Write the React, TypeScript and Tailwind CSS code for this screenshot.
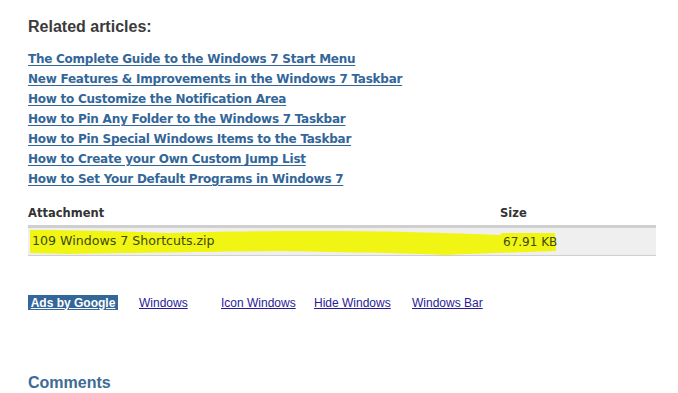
import React from "react";

const articles = [
  "The Complete Guide to the Windows 7 Start Menu",
  "New Features & Improvements in the Windows 7 Taskbar",
  "How to Customize the Notification Area",
  "How to Pin Any Folder to the Windows 7 Taskbar",
  "How to Pin Special Windows Items to the Taskbar",
  "How to Create your Own Custom Jump List",
  "How to Set Your Default Programs in Windows 7",
];

const ads = [
  { label: "Windows", w: "w-[82px]" },
  { label: "Icon Windows", w: "w-[93px]" },
  { label: "Hide Windows", w: "w-[98px]" },
  { label: "Windows Bar", w: "" },
];

const verdana = "font-['Verdana','DejaVu_Sans',sans-serif]";
const arial = "font-['Arial','Liberation_Sans',sans-serif]";

export default function App() {
  return (
    <div className="w-[678px] h-[393px] bg-white overflow-hidden pl-[28px] pr-[22px] pt-[16px]">
      <h3 className={`${arial} text-[16px] leading-[22px] font-bold text-[#3b3b3b]`}>
        Related articles:
      </h3>

      <ul className="mt-[9px]">
        {articles.map((a) => (
          <li key={a} className="h-[20px] leading-[20px]">
            <a
              href="#"
              className={`${verdana} text-[12px] tracking-[-0.25px] font-bold text-[#336699] underline underline-offset-[2px]`}
            >
              {a}
            </a>
          </li>
        ))}
      </ul>

      <div className={`${verdana} mt-[16px] w-[628px]`}>
        <div className="flex h-[22px] items-center text-[11.5px] font-bold text-[#333]">
          <div className="w-[472px]">Attachment</div>
          <div>Size</div>
        </div>
        <div className="relative flex h-[31px] items-center border-t-[3px] border-b border-t-[#cfcfcf] border-b-[#d0d0d0] bg-[#efefef] text-[12.6px] text-[#3d4a12]">
          <svg
            className="absolute left-0 top-[-1px]"
            width="540"
            height="30"
            viewBox="0 0 540 30"
          >
            <path
              d="M2 3 C40 3 90 4 140 6 C200 4 300 3 380 5 C420 6 450 7 472 8 L474 6 L527 6 L528 24 L500 25 C470 26 440 27 420 28 C380 26 300 25 250 24 C180 25 100 26 40 27 L2 26 Z"
              fill="#f1f500"
              opacity="0.92"
            />
          </svg>
          <div className="relative w-[472px] pl-[4px]">109 Windows 7 Shortcuts.zip</div>
          <div className="relative pl-[3px] text-[12px]">67.91 KB</div>
        </div>
      </div>

      <div className={`${arial} mt-[39px] flex h-[15px] items-center text-[12px]`}>
        <a
          href="#"
          className="mr-[21px] flex h-[15px] w-[90px] items-center justify-center bg-[#336699] font-bold text-white underline"
        >
          Ads by Google
        </a>
        {ads.map((ad) => (
          <a key={ad.label} href="#" className={`${ad.w} text-[#2a1a99] underline`}>
            {ad.label}
          </a>
        ))}
      </div>

      <h3 className={`${arial} mt-[63px] text-[16px] font-bold leading-[20px] text-[#3d6b96]`}>
        Comments
      </h3>
    </div>
  );
}
